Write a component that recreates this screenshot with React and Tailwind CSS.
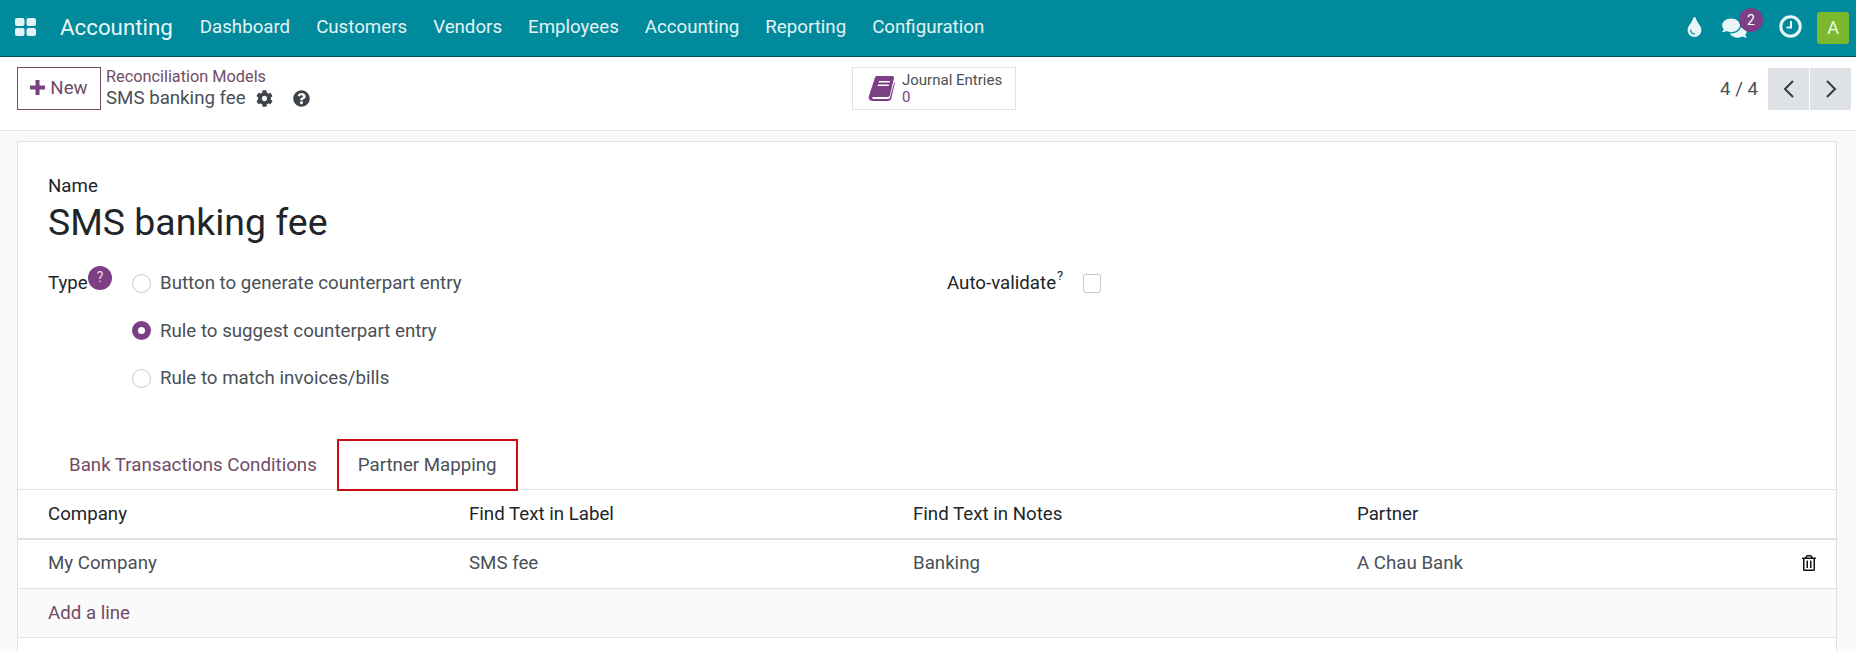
import React from "react";
import { FaTint, FaComments, FaCog, FaQuestionCircle, FaRegTrashAlt } from "react-icons/fa";

const NAV = ["Dashboard", "Customers", "Vendors", "Employees", "Accounting", "Reporting", "Configuration"];
const COLS = "grid grid-cols-[421px_444px_444px_1fr_40px] pl-[30px] items-center";

function Radio({ checked, label }) {
  return (
    <div className="flex items-center h-[24px]">
      {checked ? (
        <span className="ml-[1px] w-[19px] h-[19px] rounded-full border-[6px] border-[#7c3f85] bg-white" />
      ) : (
        <span className="ml-[1px] w-[19px] h-[19px] rounded-full border border-[#c4c7ca] bg-white" />
      )}
      <span className="ml-[9px]">{label}</span>
    </div>
  );
}

export default function App() {
  return (
    <div className="h-[651px] overflow-hidden bg-[#f8f9fb] text-[#495057] text-[18.7px] leading-[24px] font-['Roboto',sans-serif]">
      <header className="h-[57px] bg-[#018a9b] border-b border-[#03505c] flex items-center text-white">
        <svg className="ml-[15px] mb-[3px] w-[21px] h-[18px] fill-[#e3f3f5]" viewBox="0 0 21 18">
          <rect x="0" y="0" width="9.5" height="8" rx="2" />
          <rect x="11.5" y="0" width="9.5" height="8" rx="2" />
          <rect x="0" y="10" width="9.5" height="8" rx="2" />
          <rect x="11.5" y="10" width="9.5" height="8" rx="2" />
        </svg>
        <span className="ml-[24px] mb-[2px] text-[22.3px] text-[#eaf6f7]">Accounting</span>
        <nav className="ml-[14px] mb-[2px] flex text-[#e3f3f5]">
          {NAV.map((n) => (
            <span key={n} className="px-[13px]">{n}</span>
          ))}
        </nav>
        <div className="ml-auto flex items-center relative">
          <FaTint className="mb-[3px] text-[#e8f6f7] w-[19px] h-[20px]" />
          <div className="relative ml-[18px] mr-[32px]">
            <FaComments className="text-[#e8f6f7] w-[25px] h-[22px]" />
            <span className="absolute left-[17px] top-[-9px] w-[24px] h-[24px] rounded-full bg-[#7c3f85] text-white text-[14px] leading-[24px] text-center">2</span>
          </div>
          <svg className="mb-[3px] w-[23px] h-[23px]" viewBox="0 0 23 23" fill="none" stroke="#e8f6f7">
            <circle cx="11.5" cy="11.5" r="9.7" strokeWidth="3" />
            <path d="M12 6v6.5H7.5" strokeWidth="2" />
          </svg>
          <span className="ml-[15px] mr-[7px] w-[32px] h-[32px] rounded-[3px] bg-[#7cb82e] text-[#eef7e0] text-[18px] leading-[32px] text-center">A</span>
        </div>
      </header>

      <section className="h-[74px] bg-white border-b border-[#e2e5e8] flex items-start pt-[10px] pl-[17px] pr-[5px]">
        <div className="w-[835px] flex items-start">
          <button className="w-[84px] h-[43px] pb-[2px] border border-[#714b67] text-[#714b67] flex items-center justify-center gap-[5px]">
            <svg className="w-[15px] h-[15px] fill-[#7c3f85]" viewBox="0 0 15 15"><path d="M5.5 0h4v5.5H15v4H9.5V15h-4V9.5H0v-4h5.5z" /></svg>
            New
          </button>
          <div className="ml-[5px] flex flex-col">
            <span className="text-[#714b67] text-[16.3px] leading-[20px]">Reconciliation Models</span>
            <div className="flex items-center h-[24px] mt-[-1px]">
              <span>SMS banking fee</span>
              <FaCog className="ml-[10px] w-[17px] h-[17px] text-[#3f444a]" />
              <FaQuestionCircle className="ml-[20px] w-[17px] h-[17px] text-[#3f444a]" />
            </div>
          </div>
        </div>
        <div className="w-[164px] h-[43px] border border-[#dee2e6] flex items-center pl-[15px]">
          <svg className="w-[27px] h-[25px]" viewBox="0 0 27 25">
            <path fill="#7c3f85" d="M7 1.5C7.3.6 8 0 9 0h15c1.6 0 2.3 1 2 2.2L22 19c-.3 1.2-1.2 2-2.4 2H6c-1.6 0-2 .6-1.8 1.2.1.5.6.8 1.3.8h14c1.4 0 2.3-.5 2.6-1.7L26.4 6l.6.4L23.4 22c-.4 1.7-1.7 3-3.6 3H4.5C2 25 .2 23 .8 20.6z" />
            <path fill="#fff" d="M11 5h11l-.4 1.6h-11zM10 8.5h11l-.4 1.6h-11z" />
          </svg>
          <div className="ml-[7px] flex flex-col text-[15px] leading-[17px]">
            <span>Journal Entries</span>
            <span className="text-[#7c3f85]">0</span>
          </div>
        </div>
        <div className="ml-auto flex items-center h-[43px]">
          <span className="mr-[10px]">4 / 4</span>
          <div className="flex gap-[1px]">
            <span className="w-[41px] h-[42px] bg-[#dee2e6] rounded-l-[2px] flex items-center justify-center">
              <svg className="w-[14px] h-[20px]" viewBox="0 0 14 20" fill="none" stroke="#343a40" strokeWidth="2"><path d="M11 2 3 10l8 8" /></svg>
            </span>
            <span className="w-[41px] h-[42px] bg-[#dee2e6] rounded-r-[2px] flex items-center justify-center">
              <svg className="w-[14px] h-[20px]" viewBox="0 0 14 20" fill="none" stroke="#343a40" strokeWidth="2"><path d="m3 2 8 8-8 8" /></svg>
            </span>
          </div>
        </div>
      </section>

      <main className="mt-[10px] ml-[17px] mr-[19px] bg-white border-x border-t border-[#dee2e6] pt-[32px] h-[520px]">
        <div className="pl-[30px]">
          <div className="text-[#212529]">Name</div>
          <div className="mt-[2px] text-[37.4px] leading-[44px] text-[#212529]">SMS banking fee</div>
          <div className="mt-[27px] flex">
            <div className="relative w-[75px] text-[#212529]">
              Type
              <span className="absolute left-[40px] top-[-5px] w-[24px] h-[24px] rounded-full bg-[#7c3f85] text-[#eadcec] text-[14px] leading-[22px] text-center">?</span>
            </div>
            <div className="flex flex-col gap-[23.5px] w-[816px] ml-[8px]">
              <Radio label="Button to generate counterpart entry" />
              <Radio checked label="Rule to suggest counterpart entry" />
              <Radio label="Rule to match invoices/bills" />
            </div>
            <div className="flex items-start text-[#212529]">
              <span>Auto-validate</span>
              <span className="text-[13px] leading-[13px] mt-[-2px] ml-[1px]">?</span>
              <span className="ml-[20px] mt-[3px] w-[18px] h-[19px] rounded-[3px] border border-[#c4c7ca] bg-white" />
            </div>
          </div>
        </div>

        <div className="mt-[50px] h-[50px] border-b border-[#dee2e6] flex pl-[30px]">
          <div className="h-[50px] pl-[21px] pr-[20px] flex items-center text-[#714b67]">Bank Transactions Conditions</div>
          <div className="h-[52px] mt-[-1px] pb-[1px] px-[19px] flex items-center border-2 border-[#cc0d14] bg-white">Partner Mapping</div>
        </div>

        <div className={`${COLS} h-[50px] border-b-2 border-[#dee2e6] text-[#212529]`}>
          <span>Company</span>
          <span>Find Text in Label</span>
          <span>Find Text in Notes</span>
          <span>Partner</span>
          <span />
        </div>
        <div className={`${COLS} h-[49px] pb-[2px] border-b border-[#dee2e6]`}>
          <span>My Company</span>
          <span>SMS fee</span>
          <span>Banking</span>
          <span>A Chau Bank</span>
          <FaRegTrashAlt className="justify-self-end mr-[20px] w-[14px] h-[16px] text-[#111]" />
        </div>
        <div className="h-[49px] pl-[30px] flex items-center border-b border-[#dee2e6] bg-[#fafafb] text-[#714b67]">Add a line</div>
      </main>
    </div>
  );
}
